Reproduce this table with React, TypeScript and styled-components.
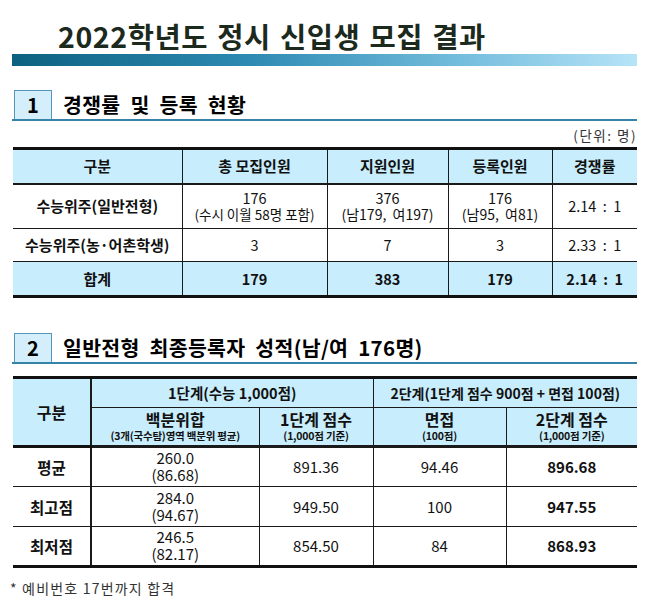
import React from 'react';
import styled, { createGlobalStyle } from 'styled-components';

const GlobalStyle = createGlobalStyle`
    body {
        margin: 0;
        background: #ffffff;
        font-family: "Noto Sans CJK KR", "Noto Sans", sans-serif;
        color: #111;
    }
`;

const Page = styled.div`
    width: 646px;
    box-sizing: border-box;
    padding: 19px 9px 12px 12px;
`;

const Title = styled.h1`
    margin: 0 0 1px 46px;
    font-size: 28.5px;
    line-height: 34px;
    font-weight: 700;
    letter-spacing: 0.6px;
    word-spacing: 2px;
    color: #1b2a1d;
`;

const Bar = styled.div`
    height: 12px;
    background: linear-gradient(90deg, #0d6180 0%, #2d8ab2 38%, #74bddd 72%, #b6e4f7 100%);
`;

const SectionHead = styled.div<{ $top: number }>`
    display: flex;
    align-items: center;
    gap: 11px;
    margin-top: ${p => p.$top}px;
    border-bottom: 2px solid #3583a8;
`;

const NumBox = styled.div`
    box-sizing: border-box;
    width: 38px;
    height: 29px;
    margin-left: 2px;
    display: flex;
    align-items: center;
    justify-content: center;
    background: #d4effb;
    border: 1.5px solid #5596b9;
    border-bottom: none;
    font-size: 20px;
    font-weight: 700;
    color: #000;
`;

const HeadText = styled.div`
    font-size: 20.5px;
    font-weight: 700;
    color: #000;
    word-spacing: 5px;
    letter-spacing: 0.3px;
`;

const Unit = styled.div`
    margin: 6px 0 4px;
    text-align: right;
    font-size: 13.5px;
    line-height: 16px;
    letter-spacing: 1.5px;
    color: #333;
`;

const Table = styled.table<{ $top?: number }>`
    width: 624px;
    margin-left: 1px;
    margin-top: ${p => p.$top ?? 0}px;
    border-collapse: collapse;
    table-layout: fixed;
    border-top: 3px solid #111;
    border-bottom: 3px solid #111;
`;

const Row = styled.tr<{ $h: number; $tint?: boolean; $line?: number }>`
    height: ${p => p.$h}px;
    background: ${p => (p.$tint ? '#c8edfc' : '#ffffff')};
    & > * {
        border-bottom: ${p => p.$line ?? 1}px solid #1a1a1a;
    }
`;

const Cell = styled.td<{ $bold?: boolean; $size?: number; $first?: number; $lh?: number }>`
    padding: 0 2px;
    text-align: center;
    vertical-align: middle;
    border-left: 1px solid #1a1a1a;
    border-right: ${p => p.$first ?? 1}px solid #1a1a1a;
    font-size: ${p => p.$size ?? 14.5}px;
    font-weight: ${p => (p.$bold ? 700 : 400)};
    line-height: ${p => p.$lh ?? 16}px;
    white-space: pre;
    color: #111;

    &:first-child {
        border-left: none;
    }
    &:last-child {
        border-right: none;
    }
`;

const Sub = styled.div<{ $size?: number; $bold?: boolean }>`
    font-size: ${p => p.$size ?? 13.5}px;
    font-weight: ${p => (p.$bold ? 700 : 400)};
    line-height: ${p => (p.$size ?? 13.5) + 3}px;
    letter-spacing: ${p => ((p.$size ?? 13.5) < 12 ? -0.2 : 0)}px;
`;

const Note = styled.div`
    margin-top: 11px;
    margin-left: -2px;
    font-size: 14px;
    line-height: 18px;
    letter-spacing: 1.2px;
    color: #333;
`;

const summary = [
    { name: '수능위주(일반전형)', quota: '176', quotaSub: '(수시 이월 58명 포함)', apply: '376', applySub: '(남179,  여197)', reg: '176', regSub: '(남95,  여81)', rate: '2.14  :  1', h: 45 },
    { name: '수능위주(농·어촌학생)', quota: '3', apply: '7', reg: '3', rate: '2.33  :  1', h: 33 },
];

const stageHeads = [
    { main: '백분위합', sub: '(3개(국수탐)영역 백분위 평균)' },
    { main: '1단계 점수', sub: '(1,000점 기준)' },
    { main: '면접', sub: '(100점)' },
    { main: '2단계 점수', sub: '(1,000점 기준)' },
];

const scores = [
    { name: '평균', sum: '260.0', pct: '(86.68)', first: '891.36', interview: '94.46', total: '896.68' },
    { name: '최고점', sum: '284.0', pct: '(94.67)', first: '949.50', interview: '100', total: '947.55' },
    { name: '최저점', sum: '246.5', pct: '(82.17)', first: '854.50', interview: '84', total: '868.93' },
];

const App = () => {
    return (
        <Page>
            <GlobalStyle />
            <Title>2022학년도 정시 신입생 모집 결과</Title>
            <Bar />

            <SectionHead $top={23}>
                <NumBox>1</NumBox>
                <HeadText>경쟁률 및 등록 현황</HeadText>
            </SectionHead>
            <Unit>(단위: 명)</Unit>

            <Table>
                <colgroup>
                    <col style={{ width: 169 }} />
                    <col style={{ width: 145 }} />
                    <col style={{ width: 121 }} />
                    <col style={{ width: 104 }} />
                    <col style={{ width: 85 }} />
                </colgroup>
                <tbody>
                    <Row $h={35} $tint $line={2}>
                        <Cell as="th" $bold $size={15}>구분</Cell>
                        <Cell as="th" $bold $size={15}>총 모집인원</Cell>
                        <Cell as="th" $bold $size={15}>지원인원</Cell>
                        <Cell as="th" $bold $size={15}>등록인원</Cell>
                        <Cell as="th" $bold $size={15}>경쟁률</Cell>
                    </Row>
                    {summary.map(r => (
                        <Row key={r.name} $h={r.h}>
                            <Cell $bold $size={15}>{r.name}</Cell>
                            <Cell>
                                {r.quota}
                                {r.quotaSub && <Sub>{r.quotaSub}</Sub>}
                            </Cell>
                            <Cell>
                                {r.apply}
                                {r.applySub && <Sub $size={14}>{r.applySub}</Sub>}
                            </Cell>
                            <Cell>
                                {r.reg}
                                {r.regSub && <Sub $size={14}>{r.regSub}</Sub>}
                            </Cell>
                            <Cell>{r.rate}</Cell>
                        </Row>
                    ))}
                    <Row $h={35} $tint $line={0}>
                        <Cell $bold $size={15}>합계</Cell>
                        <Cell $bold>179</Cell>
                        <Cell $bold>383</Cell>
                        <Cell $bold>179</Cell>
                        <Cell $bold>{'2.14  :  1'}</Cell>
                    </Row>
                </tbody>
            </Table>

            <SectionHead $top={34}>
                <NumBox>2</NumBox>
                <HeadText>일반전형 최종등록자 성적(남/여 176명)</HeadText>
            </SectionHead>

            <Table $top={12}>
                <colgroup>
                    <col style={{ width: 78 }} />
                    <col style={{ width: 168 }} />
                    <col style={{ width: 114 }} />
                    <col style={{ width: 133 }} />
                    <col style={{ width: 131 }} />
                </colgroup>
                <tbody>
                    <Row $h={30} $tint>
                        <Cell as="th" rowSpan={2} $bold $size={16} $first={2} style={{ borderBottom: '3px solid #111' }}>구분</Cell>
                        <Cell as="th" colSpan={2} $bold $size={14.5}>1단계(수능 1,000점)</Cell>
                        <Cell as="th" colSpan={2} $bold $size={14}>2단계(1단계 점수 900점 + 면접 100점)</Cell>
                    </Row>
                    <Row $h={39} $tint $line={3}>
                        {stageHeads.map(s => (
                            <Cell as="th" key={s.main} $bold $size={16} $lh={19}>
                                {s.main}
                                <Sub $size={10.5} $bold>{s.sub}</Sub>
                            </Cell>
                        ))}
                    </Row>
                    {scores.map((r, i) => (
                        <Row key={r.name} $h={40} $line={i === scores.length - 1 ? 0 : 1}>
                            <Cell $bold $size={15.5} $first={2}>{r.name}</Cell>
                            <Cell $size={15}>
                                {r.sum}
                                <Sub $size={15}>{r.pct}</Sub>
                            </Cell>
                            <Cell $size={15}>{r.first}</Cell>
                            <Cell $size={15}>{r.interview}</Cell>
                            <Cell $bold $size={15}>{r.total}</Cell>
                        </Row>
                    ))}
                </tbody>
            </Table>

            <Note>* 예비번호 17번까지 합격</Note>
        </Page>
    );
};

export default App;
